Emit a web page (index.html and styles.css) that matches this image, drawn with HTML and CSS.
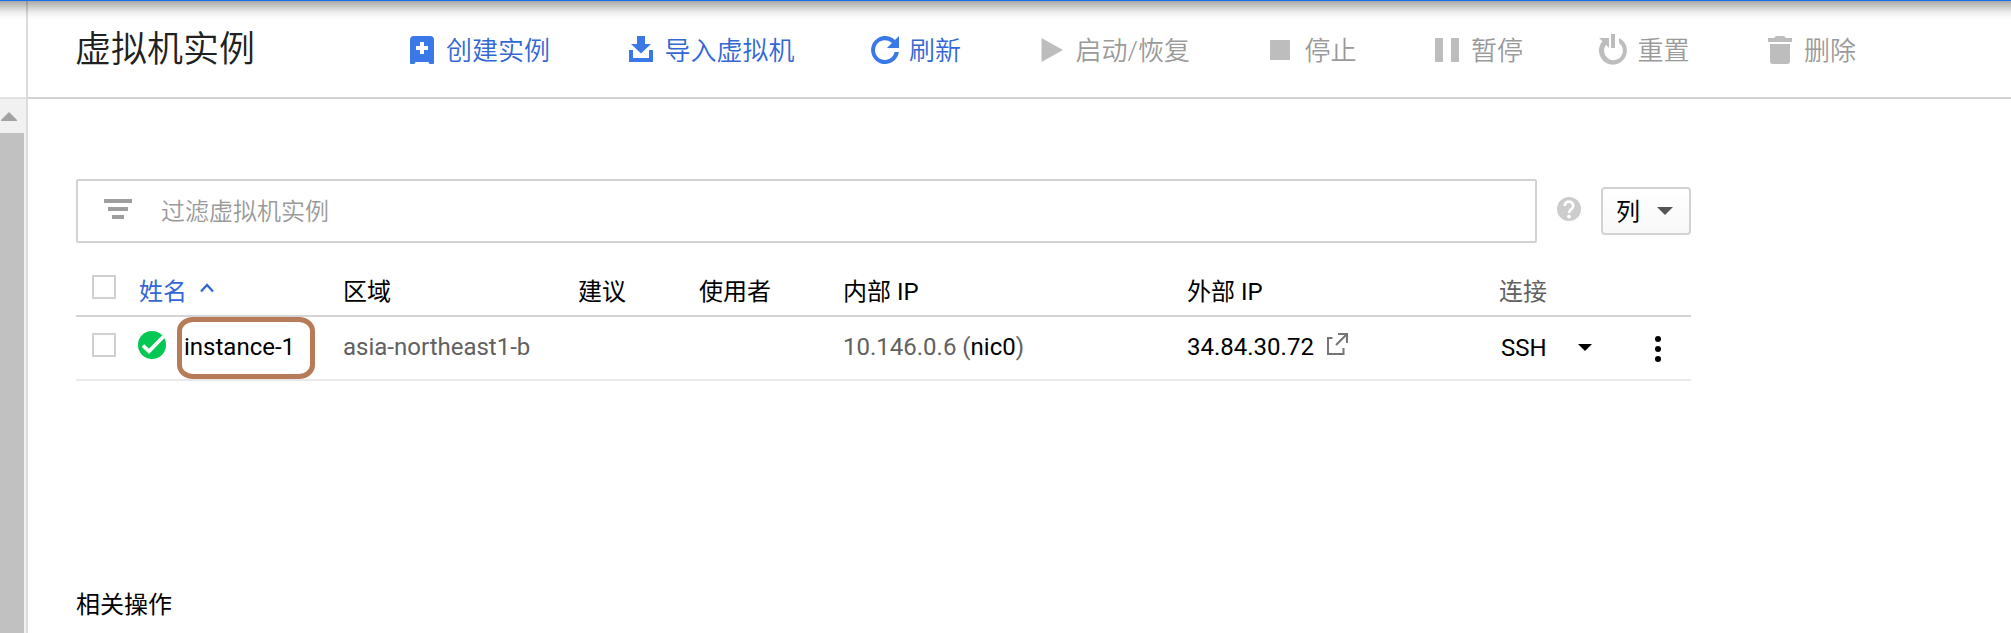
FILE: index.html
```html
<!DOCTYPE html>
<html lang="zh-CN">
<head>
<meta charset="utf-8">
<title>虚拟机实例</title>
<link rel="stylesheet" href="styles.css">
</head>
<body>
<div class="app">
  <aside class="rail">
    <div class="rail-head"></div>
    <div class="scrollbar">
      <svg class="scroll-up" width="24" height="34" viewBox="0 0 24 34"><path d="M9 13L17 21V22H1V21Z" fill="#a3a3a3"/></svg>
      <div class="thumb"></div>
    </div>
  </aside>
  <main class="main">
    <header class="header">
      <h1 class="title">虚拟机实例</h1>
      <nav class="toolbar">
        <a class="action"><svg class="icon" viewBox="0 0 28 30"><path fill-rule="evenodd" d="M6 1H22Q26 1 26 5V28Q26 29 25 29H22Q21 29 20.500 27H7.500Q7 29 6 29H3Q2 29 2 28V5Q2 1 6 1ZM12 7V11H8V15H12V19H16V15H20V11H16V7Z"/></svg>创建实例</a>
        <a class="action"><svg class="icon" viewBox="0 0 28 30"><path d="M10 1H18V9H24L14 18.500L4 9H10ZM2 15H6V23H22V15H26V27H2Z"/></svg>导入虚拟机</a>
        <a class="action"><svg class="icon" viewBox="0 0 28 30"><path d="M28 1V13H16L20.900 8.100A9.900 9.900 0 1 0 23.600 17H27.900A14 14 0 1 1 23.900 5.100Z"/></svg>刷新</a>
        <a class="action off"><svg class="icon" viewBox="0 0 28 30"><path d="M3.500 3L25 15L3.500 27Z"/></svg>启动/恢复</a>
        <a class="action off"><svg class="icon" viewBox="0 0 28 30"><path d="M4 5H24V25H4Z"/></svg>停止</a>
        <a class="action off"><svg class="icon" viewBox="0 0 28 30"><path d="M2 3H10V27H2ZM18 3H26V27H18Z"/></svg>暂停</a>
        <a class="action off"><svg class="icon" viewBox="0 0 28 30"><path d="M12 -1H16V13H12ZM0 3H10V13L7 9.800A9.500 9.500 0 1 0 20 8V3A14 14 0 1 1 3.500 6.300Z"/></svg>重置</a>
        <a class="action off"><svg class="icon" viewBox="0 0 28 30"><path d="M2 3H8L10 1H18L20 3H26V7H2ZM4 9H24V26Q24 29 21 29H7Q4 29 4 26Z"/></svg>删除</a>
      </nav>
    </header>
    <section class="content">
      <div class="filter-row">
        <div class="filter">
          <svg width="28" height="20" viewBox="0 0 28 20"><path d="M0 0H28V4H0ZM4 8H24V12H4ZM8 16H20V20H8Z" fill="#9e9e9e"/></svg>
          <span>过滤虚拟机实例</span>
        </div>
        <svg class="help" width="24" height="24" viewBox="0 0 24 24"><circle cx="12" cy="12" r="12" fill="#ccc"/><path d="M7.700 9C7.700 3.200 16.300 3.200 16.300 9C16.300 12 12 12.400 12 16" fill="none" stroke="#fff" stroke-width="2.800"/><circle cx="12" cy="19.500" r="1.900" fill="#fff"/></svg>
        <button class="columns"><span>列</span><svg width="16" height="8" viewBox="0 0 16 8"><path d="M0 0H16L8 8Z" fill="#555"/></svg></button>
      </div>
      <div class="table">
        <div class="row head">
          <div class="cell sort"><i class="box"></i><span class="name">姓名</span><svg width="14" height="10" viewBox="0 0 14 10"><path d="M1 8.500L7 2L13 8.500" fill="none" stroke="#3367d6" stroke-width="2.300"/></svg></div>
          <div class="cell">区域</div>
          <div class="cell">建议</div>
          <div class="cell">使用者</div>
          <div class="cell">内部 IP</div>
          <div class="cell">外部 IP</div>
          <div class="cell muted">连接</div>
        </div>
        <div class="row body">
          <div class="cell first"><i class="box"></i><svg class="status" width="28" height="28" viewBox="0 0 28 28"><circle cx="14" cy="14" r="14" fill="#00c853"/><path d="M5 14.500L11 20.300L25.500 5.500" fill="none" stroke="#fff" stroke-width="3.800"/></svg><a class="instance">instance-1</a></div>
          <div class="cell muted">asia-northeast1-b</div>
          <div class="cell"></div>
          <div class="cell"></div>
          <div class="cell muted">10.146.0.6 (<a class="link">nic0</a>)</div>
          <div class="cell">34.84.30.72<svg class="external" width="22" height="22" viewBox="0 0 22 22"><path d="M6.500 5H2V21H17.500V15M10 12L20 2M12 1H21V10" fill="none" stroke="#757575" stroke-width="2"/></svg></div>
          <div class="cell connect"><span class="ssh">SSH</span><svg width="14" height="8" viewBox="0 0 14 8"><path d="M0 0H14L7 7Z"/></svg><svg class="more" width="6" height="26" viewBox="0 0 6 26"><circle cx="3" cy="3" r="3"/><circle cx="3" cy="13" r="3"/><circle cx="3" cy="23" r="3"/></svg></div>
        </div>
      </div>
      <h2 class="related">相关操作</h2>
    </section>
  </main>
</div>
</body>
</html>
```
FILE: styles.css
```css
* { box-sizing: border-box; }
body {
  margin: 0;
  background: #fff;
  color: #000;
  font-family: Roboto, "Noto Sans CJK SC", sans-serif;
  font-size: 24px;
  overflow: hidden;
}
svg { display: block; flex: none; }
.app {
  position: relative;
  display: flex;
  height: 633px;
}
.app::before {
  content: "";
  position: absolute;
  inset: 0 0 auto;
  height: 20px;
  border-top: 1px solid #1a6fe8;
  background: linear-gradient(rgba(0,0,0,.34), rgba(0,0,0,.22) 25%, rgba(0,0,0,.08) 55%, rgba(0,0,0,.015) 80%, transparent);
}
.rail {
  width: 28px;
  border-right: 2px solid #dcdcdc;
  display: flex;
  flex-direction: column;
}
.rail-head { height: 99px; border-bottom: 2px solid #e0e0e0; }
.scrollbar { flex: 1; display: flex; flex-direction: column; background: #f1f1f1; }
.thumb { flex: 1; width: 24px; background: #c1c1c1; }
.main { flex: 1; }
.header {
  height: 99px;
  padding-left: 47px;
  border-bottom: 2px solid #d2d2d2;
  display: flex;
}
.title {
  width: 333px;
  margin: 0;
  font-size: 36px;
  font-weight: 350;
  line-height: 101px;
  color: #212121;
}
.toolbar { display: flex; gap: 76.5px; height: 102px; }
.action {
  display: flex;
  align-items: center;
  gap: 10px;
  font-size: 26px;
  font-weight: 350;
  line-height: 40px;
  white-space: nowrap;
  color: #3367d6;
}
.icon { width: 28px; height: 30px; margin-bottom: 2px; fill: #3b78e7; overflow: visible; }
.off { color: #9a9a9a; }
.off .icon { fill: #bdbdbd; }
.content { padding: 80px 0 0 48px; }
.filter-row { display: flex; align-items: center; width: 1615px; }
.filter {
  width: 1461px;
  height: 64px;
  padding-left: 26px;
  border: 2px solid #d2d2d2;
  border-radius: 2px;
  display: flex;
  align-items: center;
  gap: 29px;
  color: #9a9a9a;
  font-weight: 350;
}
.filter svg, .filter span { margin-bottom: 4px; }
.help { margin: -4px 20px 0; }
.columns {
  width: 90px;
  height: 48px;
  padding: 0 0 0 13px;
  border: 2px solid #d2d2d2;
  border-radius: 4px;
  background: linear-gradient(#fff, #f8f8f8);
  display: flex;
  align-items: center;
  gap: 17px;
  font: inherit;
  color: #000;
}
.columns span { margin-bottom: 4px; }
.table { width: 1615px; }
.row { display: grid; grid-template-columns: 267px 235px 121px 144px 344px 312px 192px; }
.head { height: 74px; padding-top: 20px; border-bottom: 2px solid #d4d4d4; }
.body { height: 64px; grid-auto-rows: 60px; border-bottom: 2px solid #e9e9e9; }
.cell { display: flex; align-items: center; white-space: pre; }
.box { width: 24px; height: 24px; flex: none; margin-left: 16px; border: 2px solid #d0d0d0; }
.sort { color: #3367d6; }
.sort .box { margin-bottom: 4px; }
.name { margin: 0 13px 0 23px; }
.sort svg { margin-bottom: 2px; }
.first .box, .status { margin-bottom: 4px; }
.status { margin-left: 22px; }
.instance {
  width: 138px;
  height: 62px;
  flex: none;
  margin: 2px 0 0 11px;
  padding-left: 2px;
  line-height: 50px;
  border: 5px solid #b87b58;
  border-radius: 16px / 14px;
}
.muted { color: #616161; }
.link { color: #000; }
.external { margin: -6px 0 0 12px; }
.connect { padding-left: 2px; }
.ssh { width: 77px; margin-top: 2px; }
.connect svg { margin-top: 2px; }
.connect .more { margin: 4px 0 0 63px; }
.related { margin: 206px 0 0; font-size: 24px; font-weight: 400; line-height: 36px; }
```
